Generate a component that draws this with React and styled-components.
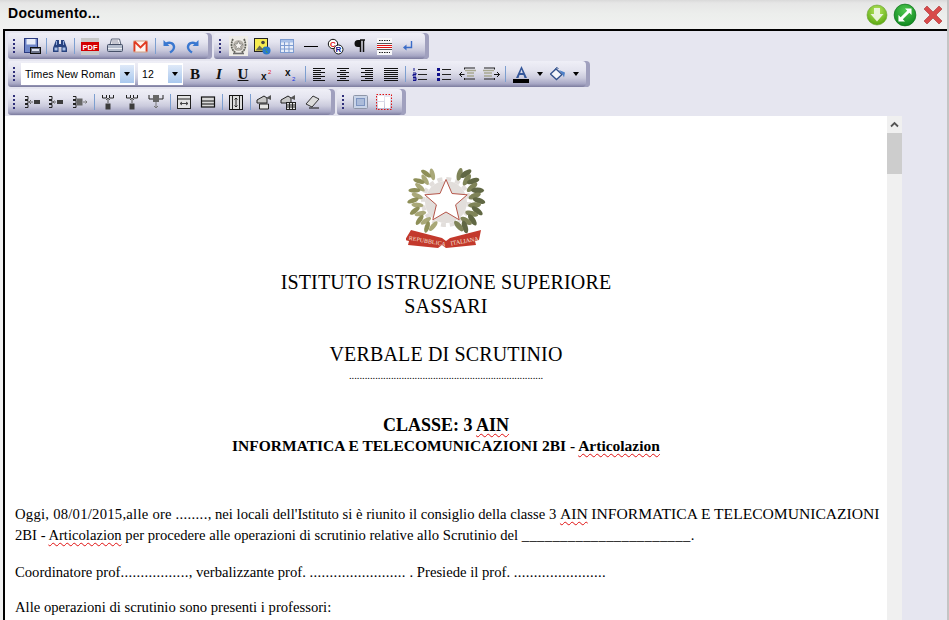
import React from 'react';
import styled, { createGlobalStyle } from 'styled-components';

const GlobalStyle = createGlobalStyle`
  html, body { margin: 0; padding: 0; background: #fff; }
  #root { width: 949px; height: 620px; overflow: hidden; }
`;

const Window = styled.div`
  width: 949px;
  height: 620px;
  display: flex;
  flex-direction: column;
  overflow: hidden;
  background: #f1f1f1;
  box-sizing: border-box;
  border-right: 2px solid #c4c4c4;
  font-family: 'Liberation Sans', Arial, sans-serif;
`;

const TitleBar = styled.div`
  height: 29px;
  flex: none;
  display: flex;
  align-items: center;
  justify-content: space-between;
  box-sizing: border-box;
  padding: 0 3px 3px 8px;
  background: linear-gradient(#d9d9d9 0, #e6e6e6 3px, #eceeec 14px, #f0f1f0 100%);
`;

const Title = styled.span`
  font-size: 14px;
  font-weight: bold;
  color: #000;
  letter-spacing: 0.3px;
`;

const WinActions = styled.div`
  display: flex;
  align-items: center;
  gap: 5px;
  margin-top: 3px;
`;

const Panel = styled.div`
  flex: 1;
  min-height: 0;
  display: flex;
  flex-direction: column;
  margin-left: 3px;
  background: #e6e6f0;
  border-left: 2px solid #000;
  border-top: 2px solid #000;
`;

const Toolbars = styled.div`
  flex: none;
  display: flex;
  flex-direction: column;
  gap: 2px;
  padding: 2px 0 1px 3px;
`;

const ToolRow = styled.div`
  display: flex;
  height: 26px;
  gap: 2px;
`;

const Group = styled.div`
  display: flex;
  align-items: center;
  box-sizing: border-box;
  height: 26px;
  width: ${(p) => p.$w}px;
  padding-left: 5px;
  border-radius: 3px 4px 4px 3px;
  background: linear-gradient(#efeff7 0, #e4e4ef 35%, #cbcbdd 65%, #a6a6c4 88%, #7c7c9e 100%);
  box-shadow: inset -4px 0 0 #a0a0be;
`;

const Grip = styled.span`
  flex: none;
  width: 2px;
  height: 14px;
  margin-right: ${(p) => p.$mr || 7}px;
  background: repeating-linear-gradient(#30307a 0 2px, transparent 2px 4px);
`;

const Sep = styled.span`
  flex: none;
  width: 1px;
  height: 16px;
  margin: 0 1.5px;
  background: #7d9fd0;
`;

const Btn = styled.span`
  flex: none;
  display: flex;
  align-items: center;
  justify-content: center;
  width: ${(p) => p.$w || 24}px;
  height: 24px;
`;

const Combo = styled.div`
  flex: none;
  display: flex;
  align-items: center;
  justify-content: space-between;
  width: ${(p) => p.$w}px;
  height: 22px;
  margin-right: ${(p) => p.$mr}px;
  background: #fff;
  font-size: 10.5px;
  color: #000;
  box-sizing: border-box;
  padding: 0 1px 0 4px;
`;

const ComboArrow = styled.span`
  width: 14px;
  height: 18px;
  display: flex;
  align-items: center;
  justify-content: center;
  background: linear-gradient(#dfe9f8, #a9c8ee);
  &::after {
    content: '';
    border: 3.5px solid transparent;
    border-top: 4px solid #000;
    border-bottom: 0;
  }
`;

const MiniArrow = styled.span`
  flex: none;
  width: ${(p) => p.$w}px;
  display: flex;
  justify-content: center;
  &::after {
    content: '';
    border: 3.5px solid transparent;
    border-top: 4px solid #000;
    border-bottom: 0;
  }
`;

const EditorRow = styled.div`
  flex: 1;
  min-height: 0;
  display: flex;
`;

const Sheet = styled.div`
  width: 882px;
  flex: none;
  background: #fff;
  overflow: hidden;
  box-sizing: border-box;
  padding: 46px 2px 0 10px;
  font-family: 'Liberation Serif', 'Times New Roman', serif;
  color: #000;
`;

const Scrollbar = styled.div`
  width: 15px;
  flex: none;
  display: flex;
  flex-direction: column;
  background: #f0f0f0;
`;

const ScrollUp = styled.div`
  height: 17px;
  display: flex;
  align-items: center;
  justify-content: center;
`;

const ScrollThumb = styled.div`
  height: 41px;
  background: #cdcdcd;
`;

const Center = styled.div`
  text-align: center;
  margin-right: 8px;
`;

const Emblem = styled.div`
  display: flex;
  justify-content: center;
  height: 92px;
  margin: 0 8px 16px 0;
`;

const Heading = styled.div`
  font-size: 20px;
  line-height: 24px;
  letter-spacing: 0.15px;
`;

const Spacer = styled.div`
  height: ${(p) => p.$h}px;
`;

const DotRule = styled.div`
  font-size: 10.5px;
  line-height: 12px;
  margin-top: 4px;
`;

const ClassLine = styled.div`
  font-size: 18px;
  line-height: 22px;
  font-weight: bold;
`;

const CourseLine = styled.div`
  font-size: 15.5px;
  line-height: 20px;
  font-weight: bold;
`;

const Para = styled.p`
  margin: 0 0 ${(p) => p.$mb || 16}px;
  font-size: 14.67px;
  line-height: 21px;
`;

const Dots = styled.span`
  letter-spacing: 0.35px;
`;

const Digits = styled.span`
  letter-spacing: 0.25px;
`;

const Caps = styled.span`
  font-size: 15.6px;
  line-height: 0;
`;

const Typo = styled.span`
  text-decoration: underline wavy #e01010 1px;
  text-underline-offset: 2px;
`;

const Ico = ({ w = 16, h = 16, children }) => (
  <svg width={w} height={h} viewBox={`0 0 ${w} ${h}`}>{children}</svg>
);

const StateCrest = () => (
  <svg width="19" height="20" viewBox="0 0 19 20">
    <rect width="19" height="20" fill="#efede8" />
    <circle cx="9.500" cy="9.500" r="5.500" fill="#b9b4ac" />
    <path d="M9.500 5l1.300 3 3.200.3-2.500 2.100.8 3.100-2.800-1.700-2.800 1.700.8-3.100L5 8.300l3.200-.3z" fill="#f4f2ee" stroke="#5c5c58" strokeWidth=".5" />
    <path d="M4 3C1.500 8 2 14 7 17M15 3c2.500 5 2 11-3 14" fill="none" stroke="#62625a" strokeWidth="1.800" strokeDasharray="2 .6" />
    <path d="M4 17.500h11" stroke="#6d6d6d" strokeWidth="1.600" />
  </svg>
);

const lines = (rows) => rows.map(([x1, x2], i) => (
  <path key={i} d={`M${x1} ${1.5 + i * 2}H${x2}`} stroke="#111" strokeWidth="1" />
));

const ColBrackets = () => (
  <path d="M1 2.500h3v3H1M1 6.500h3v3H1M1 10.500h3v3H1" fill="none" stroke="#222" />
);

const RowBrackets = () => (
  <path d="M2.500 1v3h4V1M9.500 1v3h4V1" fill="none" stroke="#222" />
);

const icons = {
  save: (
    <Ico w={17} h={17}>
      <rect x=".500" y=".500" width="13" height="14" fill="#6f86c8" stroke="#2a3a80" />
      <rect x="2.500" y="1" width="9" height="5.500" fill="#e8ecf8" />
      <rect x="6.500" y="9.500" width="10" height="6" fill="#6c7388" stroke="#111" />
      <rect x="8" y="11" width="7" height="2" fill="#dfe4f0" />
    </Ico>
  ),
  find: (
    <Ico>
      <path d="M4 2h3v4h2V2h3l3 8v4H9.500V9h-3v5H1v-4z" fill="#27427f" />
      <rect x="2.500" y="9.500" width="3" height="3" fill="#a8bfe8" />
      <rect x="10.500" y="9.500" width="3" height="3" fill="#a8bfe8" />
      <path d="M4.500 3v4M11.500 3v4" stroke="#8fa9dc" />
    </Ico>
  ),
  pdf: (
    <Ico w={18} h={17}>
      <rect width="18" height="17" fill="#c9c9c9" />
      <rect y="4" width="18" height="9" fill="#d40000" />
      <text x="9" y="11.600" textAnchor="middle" fontFamily="Liberation Sans" fontSize="7.500" fontWeight="bold" fill="#fff">PDF</text>
    </Ico>
  ),
  print: (
    <Ico>
      <path d="M4.500 1h8l1.500 6H3z" fill="#f4f4f8" stroke="#5a6378" />
      <path d="M1.500 6.500h13a1 1 0 0 1 1 1v5a1 1 0 0 1-1 1h-13a1 1 0 0 1-1-1v-5a1 1 0 0 1 1-1z" fill="#b4bccc" stroke="#465068" />
      <path d="M1 10.500h14" stroke="#eef0f5" />
      <path d="M5 3h6M5 5h7" stroke="#99a" />
    </Ico>
  ),
  mail: (
    <Ico w={15} h={15}>
      <rect x="1" y="2" width="13" height="11" fill="#fdf4ee" stroke="#d2a080" />
      <path d="M1.500 2.500v10M13.500 2.500v10M1.500 2.500l6 6 6-6" fill="none" stroke="#e03a20" strokeWidth="1.800" />
    </Ico>
  ),
  undo: (
    <Ico>
      <path d="M2.500 2v6h6z" fill="#3a78d0" />
      <path d="M4.500 6.500C7 3.500 12.500 4.500 13 8.500c.3 2.500-1.500 4.500-4 6" fill="none" stroke="#3a78d0" strokeWidth="2.400" />
    </Ico>
  ),
  redo: (
    <Ico>
      <path d="M13.500 2v6h-6z" fill="#3a78d0" />
      <path d="M11.500 6.500C9 3.500 3.500 4.500 3 8.500c-.3 2.500 1.500 4.500 4 6" fill="none" stroke="#3a78d0" strokeWidth="2.400" />
    </Ico>
  ),
  image: (
    <Ico w={17} h={17}>
      <rect x=".500" y=".500" width="13" height="13" fill="#f6ec50" stroke="#222" />
      <path d="M1.500 12.500l4-5 3 3 2-2 2 4z" fill="#6d6d50" />
      <circle cx="9" cy="4.500" r="1.800" fill="#444" />
      <circle cx="12.500" cy="12.500" r="4" fill="#2a78d0" />
      <path d="M10 10.500c2-1 3 1 2 2s1 3 2 2" fill="#4aa040" />
    </Ico>
  ),
  table: (
    <Ico>
      <rect x="1.500" y="1.500" width="13" height="13" fill="#e8eef9" stroke="#7c9bd0" />
      <rect x="2" y="2" width="12" height="2.500" fill="#a8c0e8" />
      <path d="M1.500 7.500h13M1.500 11h13M5.500 4v10M10 4v10" stroke="#7c9bd0" strokeWidth="1" />
    </Ico>
  ),
  hr: <Ico><path d="M1 8.500h14" stroke="#000" strokeWidth="1" /></Ico>,
  chars: (
    <Ico w={17} h={17}>
      <circle cx="6" cy="6" r="4.700" fill="#fff" stroke="#111" />
      <text x="6" y="8.800" textAnchor="middle" fontFamily="Liberation Sans" fontSize="8" fontWeight="bold" fill="#e01010">C</text>
      <circle cx="11.500" cy="11.500" r="4.500" fill="#fff" stroke="#111" />
      <text x="11.500" y="14.300" textAnchor="middle" fontFamily="Liberation Sans" fontSize="8" fontWeight="bold" fill="#10108a">R</text>
    </Ico>
  ),
  pilcrow: (
    <Ico w={14} h={16}>
      <path d="M7 2H5a3.500 3.500 0 0 0 0 7h2z" fill="#111" />
      <path d="M7 2h5M7.500 2v12M10.500 2v12" stroke="#111" strokeWidth="1.500" fill="none" />
    </Ico>
  ),
  pagebreak: (
    <Ico w={15} h={17}>
      <rect width="15" height="17" fill="#f8f8fa" />
      <path d="M2 2.500h11M2 14.500h11" stroke="#222" strokeDasharray="1.500 1" />
      <path d="M0 7.500h15M0 9.500h15" stroke="#e01010" />
      <path d="M0 5.500h15M0 11.500h15" stroke="#555" />
    </Ico>
  ),
  br: (
    <Ico w={12} h={12}>
      <path d="M9.500 1v6.500H3" fill="none" stroke="#3a6cc8" strokeWidth="1.400" />
      <path d="M1 7.500l3.500-3v6z" fill="#3a6cc8" />
    </Ico>
  ),
  sup: (
    <Ico w={12} h={14}>
      <text x="0" y="13" fontFamily="Liberation Sans" fontSize="10" fontWeight="bold" fill="#111">x</text>
      <text x="7" y="7" fontFamily="Liberation Sans" fontSize="6" fill="#e01010">2</text>
    </Ico>
  ),
  sub: (
    <Ico w={13} h={14}>
      <text x="0" y="9" fontFamily="Liberation Sans" fontSize="10" fontWeight="bold" fill="#111">x</text>
      <text x="7" y="14" fontFamily="Liberation Sans" fontSize="6" fill="#1030e0">2</text>
    </Ico>
  ),
  alignL: <Ico w={14} h={14}>{lines([[1,13],[1,9],[1,13],[1,9],[1,13],[1,9],[1,13]])}</Ico>,
  alignC: <Ico w={14} h={14}>{lines([[1,13],[4,10],[1,13],[4,10],[1,13],[4,10],[1,13]])}</Ico>,
  alignR: <Ico w={14} h={14}>{lines([[1,13],[5,13],[1,13],[5,13],[1,13],[5,13],[1,13]])}</Ico>,
  alignJ: <Ico w={16} h={14}>{lines([[1,15],[1,15],[1,15],[1,15],[1,15],[1,15],[1,15]])}</Ico>,
  ol: (
    <Ico w={15} h={14}>
      <path d="M2 1v3M1 6h3v1.500H1V9h3M1 10.500h3v3H1M1 12h3" fill="none" stroke="#10108a" />
      <path d="M6 2.500h9M6 7.500h9M6 12.500h9" stroke="#222" />
    </Ico>
  ),
  ul: (
    <Ico w={15} h={14}>
      <path d="M1 1h3v3H1zM1 6h3v3H1zM1 11h3v3H1z" fill="#10108a" />
      <path d="M6 2.500h9M6 7.500h9M6 12.500h9" stroke="#222" />
    </Ico>
  ),
  outdent: (
    <Ico w={17} h={14}>
      <path d="M6 3.500h11M8 6h7M8 9h7" stroke="#a8a890" strokeWidth="1.600" />
      <path d="M5.500 .500v2M5.500 11v2" stroke="#222" />
      <path d="M.500 7.500h5M3 5l-2.500 2.500L3 10" fill="none" stroke="#111" />
      <path d="M6 12h10M6 1h10" stroke="#222" />
    </Ico>
  ),
  indent: (
    <Ico w={17} h={14}>
      <path d="M0 3.500h11M1 6h8M1 9h8" stroke="#a8a890" strokeWidth="1.600" />
      <path d="M11 7.500h5.500M14 5l2.500 2.500L14 10" fill="none" stroke="#111" />
      <path d="M11.500 .500v2M11.500 11v2" stroke="#222" />
      <path d="M1 12h10M1 1h10" stroke="#222" />
    </Ico>
  ),
  fontColor: (
    <Ico w={17} h={17}>
      <path d="M8.500 0L3 12h2.500l1-3h4l1 3H14zM7.200 7l1.300-3.500L9.800 7z" fill="#35579a" />
      <rect y="13" width="16" height="4" fill="#000" />
    </Ico>
  ),
  bgColor: (
    <Ico w={16} h={15}>
      <path d="M.500 7L6 2l6 5.500-5.500 5z" fill="#f4f6fa" stroke="#33528c" strokeWidth="1.300" />
      <path d="M4.500 3.500L6.500.500l2 1" fill="none" stroke="#33528c" />
      <path d="M9 3l6 2.500-1 5-1.500-3z" fill="#4d80c8" />
    </Ico>
  ),
  colBefore: (
    <Ico>
      <ColBrackets />
      <path d="M5 8h4M7 6L5 8l2 2" fill="none" stroke="#666" />
      <rect x="10" y="6" width="6" height="4" fill="#3c3c3c" />
    </Ico>
  ),
  colAfter: (
    <Ico>
      <ColBrackets />
      <path d="M5 8h3M6.500 6.500L5 8l1.500 1.500" fill="none" stroke="#666" />
      <rect x="9" y="6" width="6" height="4" fill="#3c3c3c" />
    </Ico>
  ),
  colDelete: (
    <Ico>
      <ColBrackets />
      <rect x="4.500" y="4.500" width="6" height="7" fill="#666" />
      <path d="M11 8h4M13.500 6.500L15 8l-1.500 1.500" fill="none" stroke="#777" />
    </Ico>
  ),
  rowAbove: (
    <Ico>
      <RowBrackets />
      <path d="M8 4v5M6 6l2-2 2 2" fill="none" stroke="#555" />
      <rect x="5.500" y="9.500" width="5" height="6" fill="#3c3c3c" />
    </Ico>
  ),
  rowDelete: (
    <Ico>
      <path d="M1 1v4h14V1M5.500 1v4M10.500 1v4" fill="none" stroke="#222" />
      <rect x="5" y="1" width="6" height="7" fill="#666" />
      <path d="M8 8v6M6 12l2 2 2-2" fill="none" stroke="#777" />
    </Ico>
  ),
  cell: (
    <Ico>
      <rect x="1.500" y="1.500" width="13" height="13" fill="#e4e4e4" stroke="#222" />
      <path d="M1.500 5h13" stroke="#222" />
      <path d="M4 9.500h8M6 8L4 9.500 6 11M10 8l2 1.500L10 11" stroke="#444" fill="none" />
    </Ico>
  ),
  rows: (
    <Ico>
      <rect x="1.500" y="3" width="13" height="10" fill="#d8d8d8" stroke="#111" strokeWidth="1.200" />
      <path d="M1.500 7h13M1.500 10h13" stroke="#111" />
    </Ico>
  ),
  cols: (
    <Ico w={14} h={15}>
      <rect x=".500" y=".500" width="13" height="14" fill="#dcdcdc" stroke="#111" />
      <path d="M3.500 1v13M10.500 1v13M7 3v9M5.500 4.500L7 3l1.500 1.500M5.500 10.500L7 12l1.500-1.500" stroke="#222" fill="none" />
    </Ico>
  ),
  cut: (
    <Ico>
      <path d="M1 6l7-4 3 2v5H1z" fill="#c8c8c8" stroke="#222" />
      <path d="M3.500 10h9v5h-9z" fill="#e6e6e6" stroke="#222" />
      <path d="M10 4l5-3v5z" fill="#555" />
    </Ico>
  ),
  tableCut: (
    <Ico>
      <path d="M1 6l7-4 3 2v5H1z" fill="#c8c8c8" stroke="#222" />
      <rect x="6.500" y="8.500" width="9" height="7" fill="#e6e6e6" stroke="#222" />
      <path d="M6.500 11h9M6.500 13h9M9.500 8.500v7M12.500 8.500v7" stroke="#222" />
      <path d="M10 4l5-3v5z" fill="#555" />
    </Ico>
  ),
  eraser: (
    <Ico w={15} h={14}>
      <path d="M1 9l7-8 6 3-7 8z" fill="#dcdcdc" stroke="#333" />
      <path d="M4 13h10" stroke="#111" />
    </Ico>
  ),
  maximize: (
    <Ico w={15} h={14}>
      <rect x=".500" y=".500" width="14" height="13" rx="1" fill="#c9d4e8" stroke="#8e96a8" />
      <rect x="3" y="3" width="9" height="8" fill="#7d94c0" />
      <path d="M4 5h7M4 7h7M4 9h7" stroke="#dbe3f3" />
    </Ico>
  ),
  blocks: (
    <Ico>
      <rect x=".500" y=".500" width="15" height="15" fill="none" stroke="#e01010" strokeDasharray="1.500 1.500" />
      <rect x="2" y="2" width="6" height="5" fill="#fff" />
      <rect x="2" y="8" width="6" height="6" fill="#fff" />
      <rect x="9" y="3" width="5" height="11" fill="#fff" />
    </Ico>
  ),
};

const Glyph = styled.span`
  font-family: 'Liberation Serif', serif;
  font-size: 15px;
  font-weight: bold;
  font-style: ${(p) => (p.$i ? 'italic' : 'normal')};
  text-decoration: ${(p) => (p.$u ? 'underline' : 'none')};
  color: #111;
`;

const ComboLabel = styled.span`
  letter-spacing: 0.1px;
`;

const RoundBtn = ({ grad, children, size = 22 }) => (
  <svg width={size} height={size} viewBox="0 0 22 22">
    <defs>
      <radialGradient id={grad[0]} cx="50%" cy="30%" r="70%">
        <stop offset="0" stopColor={grad[1]} />
        <stop offset="1" stopColor={grad[2]} />
      </radialGradient>
    </defs>
    <circle cx="11" cy="11" r="10" fill={`url(#${grad[0]})`} stroke={grad[3]} strokeWidth=".6" />
    {children}
  </svg>
);

// leaves laid out along the two branches of the wreath
const leaves = (side) => Array.from({ length: 15 }, (_, i) => {
  const a = (-62 + i * 9) * (Math.PI / 180);
  const r = 31 + (i % 2 ? 2 : -2);
  const x = 40 + side * r * Math.cos(a);
  const y = 38 + r * Math.sin(a);
  const rot = side * (i * 9 + 24 + (i % 2 ? 22 : -10));
  return { x, y, rot };
});

const ItalyEmblem = () => (
  <svg width="80" height="92" viewBox="0 0 80 92">
    <circle cx="40" cy="40" r="21" fill="#e2dedb" />
    <circle cx="40" cy="40" r="23" fill="none" stroke="#e2dedb" strokeWidth="4" strokeDasharray="5 4" />
    <path d="M40 17.500l6 14 15.200 1.300-11.600 10 3.600 15L40 50l-13.200 7.800 3.600-15-11.600-10 15.200-1.300z" fill="#fff" stroke="#b5564a" strokeWidth="1" />
    {leaves(-1).map((l, i) => (
      <ellipse key={i} cx={l.x} cy={l.y} rx="2.400" ry="6" fill={i % 2 ? '#8e8f58' : '#a9a878'} transform={`rotate(${l.rot} ${l.x} ${l.y})`} />
    ))}
    {leaves(1).map((l, i) => (
      <ellipse key={i} cx={l.x} cy={l.y} rx="2.800" ry="6.500" fill={i % 2 ? '#616844' : '#7f8458'} transform={`rotate(${l.rot} ${l.x} ${l.y})`} />
    ))}
    <path d="M5 68l31 8 4 3 4-3 31-8-2 10-4 1 1 4-30 3-4-3-4 3-30-3 1-4-4-1z" fill="#c3392c" />
    <text x="21" y="81" textAnchor="middle" fontFamily="Liberation Serif" fontSize="6" fill="#f6e6dc" transform="rotate(10 21 81)">REPUBBLICA</text>
    <text x="59" y="81" textAnchor="middle" fontFamily="Liberation Serif" fontSize="6" fill="#f6e6dc" transform="rotate(-10 59 81)">ITALIANA</text>
  </svg>
);

const App = () => (
  <>
    <GlobalStyle />
    <Window>
      <TitleBar>
        <Title>Documento...</Title>
        <WinActions>
          <RoundBtn grad={['gDown', '#b8e860', '#5aa810', '#6aa030']}>
            <path d="M8 4h6v6h3.500L11 17.500 4.500 10H8z" fill="#e8f4d8" />
          </RoundBtn>
          <RoundBtn grad={['gSwap', '#50c850', '#108a20', '#0c7018']} size={24}>
            <path d="M11 5h6v6l-2-2-6 6 2 2H5v-6l2 2 6-6z" fill="#fff" />
          </RoundBtn>
          <svg width="22" height="22" viewBox="0 0 22 22">
            <path d="M2 5l3-3 6 6 6-6 3 3-6 6 6 6-3 3-6-6-6 6-3-3 6-6z" fill="#d84a4a" stroke="#a83030" strokeWidth=".6" />
          </svg>
        </WinActions>
      </TitleBar>
      <Panel>
        <Toolbars>
          <ToolRow>
            <Group $w={204}>
              <Grip $mr={5} />
              <Btn>{icons.save}</Btn>
              <Sep />
              <Btn>{icons.find}</Btn>
              <Sep />
              <Btn $w={27}>{icons.pdf}</Btn>
              <Btn>{icons.print}</Btn>
              <Btn $w={26}>{icons.mail}</Btn>
              <Sep />
              <Btn>{icons.undo}</Btn>
              <Btn>{icons.redo}</Btn>
            </Group>
            <Group $w={215}>
              <Grip $mr={5} />
              <Btn><StateCrest /></Btn>
              <Btn $w={25}>{icons.image}</Btn>
              <Btn>{icons.table}</Btn>
              <Btn>{icons.hr}</Btn>
              <Btn $w={25}>{icons.chars}</Btn>
              <Btn>{icons.pilcrow}</Btn>
              <Btn>{icons.pagebreak}</Btn>
              <Btn>{icons.br}</Btn>
            </Group>
          </ToolRow>
          <ToolRow>
            <Group $w={582}>
              <Grip $mr={6} />
              <Combo $w={114} $mr={3}>
                <ComboLabel>Times New Roman</ComboLabel>
                <ComboArrow />
              </Combo>
              <Combo $w={45} $mr={0}>
                <ComboLabel>12</ComboLabel>
                <ComboArrow />
              </Combo>
              <Btn><Glyph>B</Glyph></Btn>
              <Btn><Glyph $i>I</Glyph></Btn>
              <Btn><Glyph $u>U</Glyph></Btn>
              <Btn>{icons.sup}</Btn>
              <Btn>{icons.sub}</Btn>
              <Sep />
              <Btn>{icons.alignL}</Btn>
              <Btn>{icons.alignC}</Btn>
              <Btn>{icons.alignR}</Btn>
              <Btn>{icons.alignJ}</Btn>
              <Sep />
              <Btn>{icons.ol}</Btn>
              <Btn>{icons.ul}</Btn>
              <Btn>{icons.outdent}</Btn>
              <Btn>{icons.indent}</Btn>
              <Sep />
              <Btn $w={28}>{icons.fontColor}</Btn>
              <MiniArrow $w={9} />
              <Btn $w={27}>{icons.bgColor}</Btn>
              <MiniArrow $w={9} />
            </Group>
          </ToolRow>
          <ToolRow>
            <Group $w={327}>
              <Grip $mr={5} />
              <Btn>{icons.colBefore}</Btn>
              <Btn>{icons.colAfter}</Btn>
              <Btn>{icons.colDelete}</Btn>
              <Sep />
              <Btn>{icons.rowAbove}</Btn>
              <Btn>{icons.rowAbove}</Btn>
              <Btn>{icons.rowDelete}</Btn>
              <Sep />
              <Btn>{icons.cell}</Btn>
              <Btn>{icons.rows}</Btn>
              <Sep />
              <Btn>{icons.cols}</Btn>
              <Sep />
              <Btn>{icons.cut}</Btn>
              <Btn>{icons.tableCut}</Btn>
              <Btn>{icons.eraser}</Btn>
            </Group>
            <Group $w={69}>
              <Grip $mr={4} />
              <Btn>{icons.maximize}</Btn>
              <Btn>{icons.blocks}</Btn>
            </Group>
          </ToolRow>
        </Toolbars>
        <EditorRow>
          <Sheet>
            <Emblem>
              <ItalyEmblem />
            </Emblem>
            <Center>
              <Heading>ISTITUTO ISTRUZIONE SUPERIORE</Heading>
              <Heading>SASSARI</Heading>
              <Spacer $h={24} />
              <Heading>VERBALE DI SCRUTINIO</Heading>
              <DotRule>..........................................................................</DotRule>
              <Spacer $h={32} />
              <ClassLine>CLASSE: 3 <Typo>AIN</Typo></ClassLine>
              <CourseLine>INFORMATICA E TELECOMUNICAZIONI 2BI - <Typo>Articolazion</Typo></CourseLine>
            </Center>
            <Spacer $h={48} />
            <Para>
              <Digits>Oggi, 08/01/2015,alle ore</Digits> <Dots>........</Dots>, nei locali dell'Istituto si è riunito il consiglio della classe 3 <Typo><Caps>AIN</Caps></Typo> <Caps>INFORMATICA E TELECOMUNICAZIONI</Caps> 2BI - <Typo>Articolazion</Typo> per procedere alle operazioni di scrutinio relative allo Scrutinio del <Dots>______________________</Dots>.
            </Para>
            <Para $mb={14}>
              Coordinatore prof<Dots>.................</Dots>, verbalizzante prof. <Dots>........................</Dots> . Presiede il prof. <Dots>.......................</Dots>
            </Para>
            <Para>Alle operazioni di scrutinio sono presenti i professori:</Para>
          </Sheet>
          <Scrollbar>
            <ScrollUp>
              <svg width="9" height="7" viewBox="0 0 9 7">
                <path d="M1 5.500l3.500-3.500L8 5.500" fill="none" stroke="#555" strokeWidth="1.800" />
              </svg>
            </ScrollUp>
            <ScrollThumb />
          </Scrollbar>
        </EditorRow>
      </Panel>
    </Window>
  </>
);

export default App;
